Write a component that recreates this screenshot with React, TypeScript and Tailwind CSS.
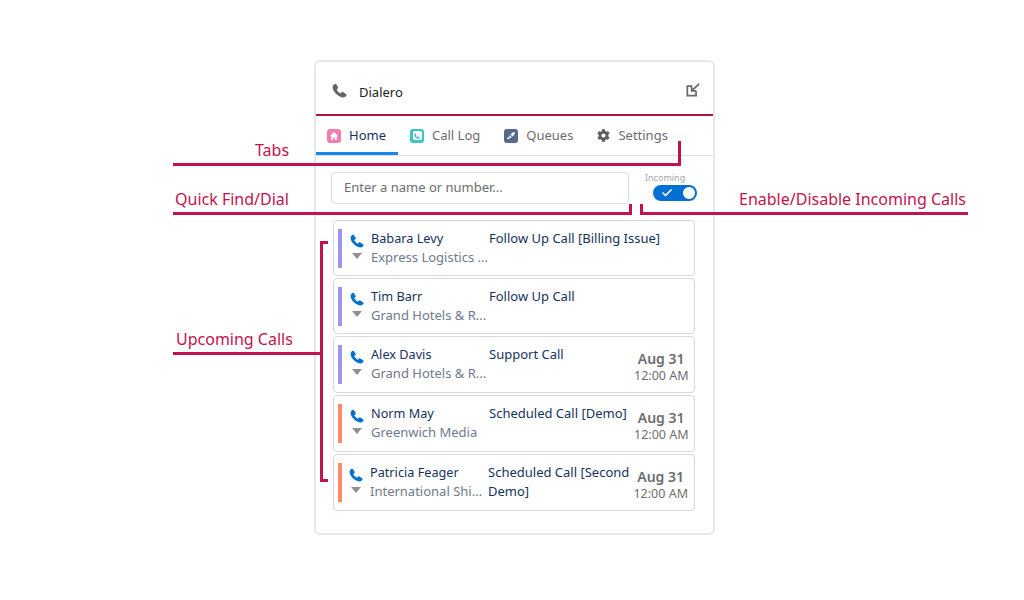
import { Check } from "lucide-react";
import { FaCog } from "react-icons/fa";

const font = "font-['Noto_Sans',sans-serif]";

const PhoneIcon = ({ className }: { className: string }) => (
  <svg viewBox="0 0 24 24" className={className} fill="currentColor">
    <path d="M6.200 1.200 9.600 6.400c.4.700.3 1.500-.2 2L7.800 10c-.3.3-.4.8-.2 1.200 1.200 2 3 3.900 5.200 5.200.4.200.9.100 1.200-.2l1.600-1.600c.6-.5 1.400-.6 2-.2l5.200 3.400c.7.500.9 1.400.4 2.100-1.100 1.700-2.700 3.100-4.700 3.100C10.500 23 1 13.500 1 6.700c0-2 1.300-3.800 3-4.900.7-.5 1.700-.3 2.200-.6z" />
  </svg>
);

type Call = {
  name: string;
  company: string;
  subject: string;
  bar: string;
  date?: boolean;
  tight?: boolean;
};

const calls: Call[] = [
  { name: "Babara Levy", company: "Express Logistics ...", subject: "Follow Up Call [Billing Issue]", bar: "bg-[#a094ed]" },
  { name: "Tim Barr", company: "Grand Hotels & R...", subject: "Follow Up Call", bar: "bg-[#a094ed]" },
  { name: "Alex Davis", company: "Grand Hotels & R...", subject: "Support Call", bar: "bg-[#a094ed]", date: true },
  { name: "Norm May", company: "Greenwich Media", subject: "Scheduled Call [Demo]", bar: "bg-[#ff8a65]", date: true },
  { name: "Patricia Feager", company: "International Shi...", subject: "Scheduled Call [Second Demo]", bar: "bg-[#ff8a65]", date: true, tight: true },
];

const CallRow = ({ call }: { call: Call }) => (
  <div className={`rounded border border-[#d8d8d8] bg-white pl-1 pr-1.5 pt-2 ${call.date ? "h-[57px]" : "h-[56px]"}`}>
    <div className="flex">
      <div className={`h-[39px] w-1 shrink-0 ${call.bar}`} />
      <div className={`flex w-[14px] shrink-0 flex-col items-center pt-[5px] ${call.tight ? "ml-[7px]" : "ml-2"}`}>
        <PhoneIcon className="h-[14px] w-[14px] text-[#0070d2]" />
        <div className="mt-[5px] h-0 w-0 border-x-[5px] border-t-[6px] border-x-transparent border-t-[#8f8f8f]" />
      </div>
      <div className="ml-[7px] w-[118px] shrink-0 text-[13px] leading-[19px]">
        <div className="text-[12.7px] text-[#16325c]">{call.name}</div>
        <div className="whitespace-nowrap text-[#6f7a8a]">{call.company}</div>
      </div>
      <div className={`text-[13px] leading-[19px] text-[#16325c] ${call.date ? "w-[145px] shrink-0" : "flex-1"}`}>{call.subject}</div>
      {call.date && (
        <div className="flex-1 whitespace-nowrap pt-[4px] text-right">
          <div className="pr-[4px] text-[14px] font-semibold leading-[20px] text-[#6b6d70]">Aug 31</div>
          <div className="text-[12.5px] leading-[14px] text-[#706e6b]">12:00 AM</div>
        </div>
      )}
    </div>
  </div>
);

const Tab = ({ icon, label, active }: { icon: React.ReactNode; label: string; active?: boolean }) => (
  <div className={`flex h-[39px] items-center gap-[8px] border-b-[3px] px-3 pt-[3px] text-[13px] first:pl-[11px] ${active ? "border-[#1589ee] text-[#16325c]" : "border-transparent text-[#6b6d70]"}`}>
    {icon}
    <span>{label}</span>
  </div>
);

const Label = ({ className, children }: { className: string; children: string }) => (
  <div className={`absolute whitespace-nowrap text-[16px] leading-[22px] text-[#c2134f] ${className}`}>{children}</div>
);

const Rule = ({ className }: { className: string }) => <div className={`absolute bg-[#c2134f] ${className}`} />;

export default function App() {
  return (
    <div className={`relative h-[600px] w-[1024px] overflow-hidden bg-white pl-[314px] pt-[60px] ${font}`}>
      <div className="h-[475px] w-[401px] rounded-md border-2 border-[#e8e8e8] bg-white">
        <div className="flex h-[54px] items-center justify-between border-b-2 border-[#a8123f] pl-4 pr-[13px] pt-2">
          <div className="flex items-center gap-[12px]">
            <PhoneIcon className="mb-[3px] h-[15px] w-[15px] text-[#666]" />
            <span className="mt-[1px] text-[13px] text-[#222]">Dialero</span>
          </div>
          <svg viewBox="0 0 16 16" className="mb-[4px] h-[14px] w-[14px] text-[#6b6b6b]" fill="none" stroke="currentColor" strokeWidth="2">
            <path d="M7 3.500H1.500v11h10V9" />
            <path d="M15 1 7 8.500M6.500 4v5h5" />
          </svg>
        </div>

        <div className="flex h-[40px] border-b border-[#dcdcdc]">
          <Tab
            active
            label="Home"
            icon={
              <span className="flex h-[14px] w-[14px] items-center justify-center rounded-[3px] bg-[#ef7ead]">
                <svg viewBox="0 0 10 10" className="h-[10px] w-[10px]" fill="white"><path d="M5 1 .8 5.200h1.400V9h2V6.500h1.600V9h2V5.200h1.400z" /></svg>
              </span>
            }
          />
          <Tab
            label="Call Log"
            icon={
              <span className="flex h-[14px] w-[14px] items-center justify-center rounded-[3px] bg-[#3fc4c9]">
                <span className="flex h-[9px] w-[9px] items-center justify-center rounded-[2px] bg-white">
                  <PhoneIcon className="h-[6px] w-[6px] text-[#3fc4c9]" />
                </span>
              </span>
            }
          />
          <Tab
            label="Queues"
            icon={
              <span className="flex h-[14px] w-[14px] items-center justify-center rounded-[3px] bg-[#54698d]">
                <svg viewBox="0 0 10 10" className="h-[10px] w-[10px]" fill="white"><path d="M6.500 1.500 9 1l-.5 2.500-2 2-2-2zM3.800 4.200l2 2L4.500 7 3 5.500zM1 7l2-1 1 1-2 1.500z" /></svg>
              </span>
            }
          />
          <Tab label="Settings" icon={<FaCog className="h-[13px] w-[13px] text-[#5f5f5f]" />} />
        </div>

        <div className="flex pl-[15px] pt-4">
          <div className="flex h-[32px] w-[298px] items-center rounded border border-[#d8dde6] pl-3 text-[13px] text-[#6b6d70]">
            Enter a name or number...
          </div>
          <div className="ml-4 flex flex-col">
            <span className="text-[9px] leading-[12px] text-[#a8a8a8]">Incoming</span>
            <div className="ml-2 mt-[1px] flex h-4 w-[44px] items-center justify-between rounded-full bg-[#0070d2] pl-[8px] pr-[2px]">
              <Check className="h-3 w-3 text-white" strokeWidth={3.500} />
              <span className="h-3 w-3 rounded-full bg-white" />
            </div>
          </div>
        </div>

        <div className="ml-[17px] mt-4 flex w-[362px] flex-col gap-[2px]">
          {calls.map((call) => (
            <CallRow key={call.name} call={call} />
          ))}
        </div>
      </div>

      <Label className="left-[255px] top-[139px]">Tabs</Label>
      <Rule className="left-[173px] top-[163px] h-[3px] w-[508px]" />
      <Rule className="left-[678px] top-[141px] h-[25px] w-[3px]" />

      <Label className="left-[175px] top-[188px]">Quick Find/Dial</Label>
      <Rule className="left-[173px] top-[212px] h-[3px] w-[459px]" />
      <Rule className="left-[629px] top-[204px] h-[11px] w-[3px]" />

      <Label className="left-[739px] top-[188px]">Enable/Disable Incoming Calls</Label>
      <Rule className="left-[640px] top-[212px] h-[3px] w-[328px]" />
      <Rule className="left-[640px] top-[204px] h-[11px] w-[3px]" />

      <Label className="left-[176px] top-[328px]">Upcoming Calls</Label>
      <Rule className="left-[173px] top-[352px] h-[3px] w-[147px]" />
      <Rule className="left-[320px] top-[241px] h-[241px] w-[3px]" />
      <Rule className="left-[320px] top-[241px] h-[3px] w-[8px]" />
      <Rule className="left-[320px] top-[479px] h-[3px] w-[8px]" />
    </div>
  );
}
